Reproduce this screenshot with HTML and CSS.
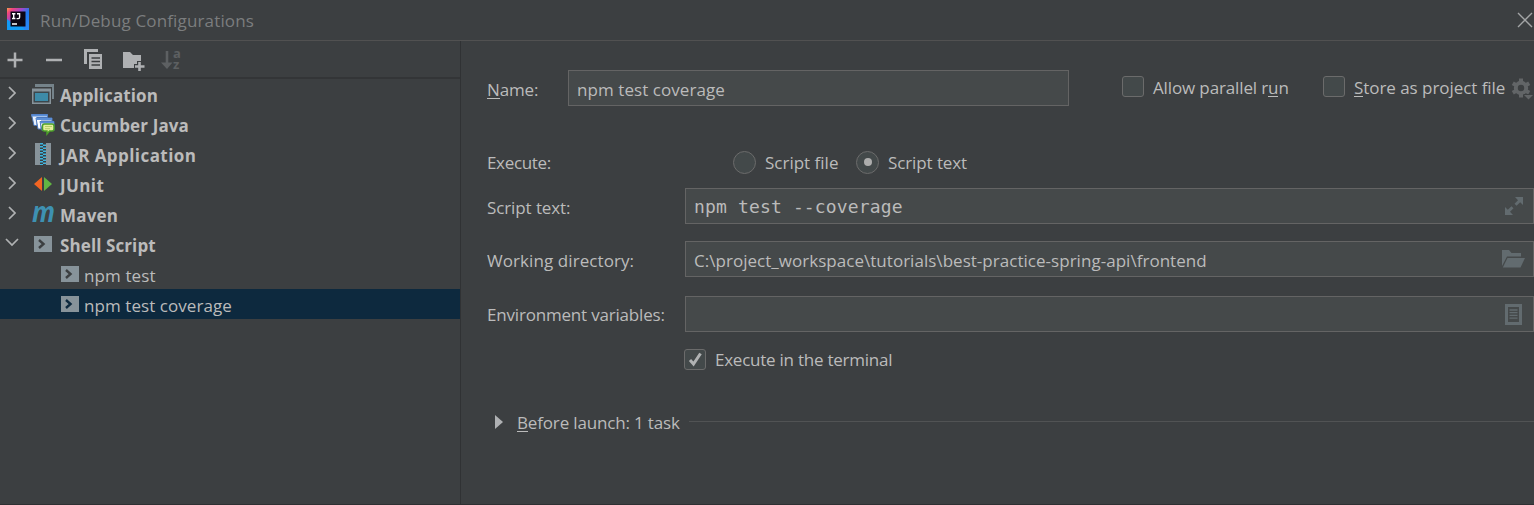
FILE: index.html
```html
<!DOCTYPE html>
<html lang="en">
<head>
<meta charset="utf-8">
<title>Run/Debug Configurations</title>
<link rel="stylesheet" href="styles.css">
</head>
<body>
<svg class="defs" width="0" height="0">
  <symbol id="right" viewBox="0 0 8 14"><path d="M1 1l6 6-6 6" fill="none" stroke="#b0b2b3" stroke-width="1.7"/></symbol>
  <symbol id="shell" viewBox="0 0 18 16"><path fill="#87939a" d="M0 0h18v16H0z"/><path d="M5 4l4.500 4L5 12" fill="none" stroke="currentColor" stroke-width="2.400"/></symbol>
</svg>
<div class="dialog">
  <header class="titlebar">
    <svg class="logo" width="22" height="22" viewBox="0 0 22 22">
      <defs><linearGradient id="lg" x1="0" y1="0" x2="1" y2="1"><stop offset="0" stop-color="#f7a04b"/><stop offset=".14" stop-color="#f0447c"/><stop offset=".36" stop-color="#a247c8"/><stop offset=".55" stop-color="#2378f0"/><stop offset="1" stop-color="#2889f5"/></linearGradient></defs>
      <path fill="url(#lg)" d="M0 0h22v22H0z"/><path fill="#129bf5" d="M0 11l4 3v4h11l3 4H0z"/><path fill="#0c0614" d="M3.500 3.500h15v15h-15z"/>
      <path d="M5 5.700h3.400M6.700 5.700v5M5 10.500h3.400M10 5.700h2.600v3.600q0 1.300-1.300 1.300H9.600M5 16h5" fill="none" stroke="#fff" stroke-width="1.400"/>
    </svg>
    <h1 class="title">Run/Debug Configurations</h1>
    <svg class="close" width="16" height="16" viewBox="0 0 16 16"><path d="M1 1l14 14M15 1L1 15" stroke="#a3a5a6" stroke-width="1.400"/></svg>
  </header>
  <div class="body">
    <aside class="sidebar">
      <div class="toolbar">
        <svg width="16" height="16" viewBox="0 0 16 16"><path d="M8 0.500v15M.5 8h15" stroke="#afb1b3" stroke-width="2.500"/></svg>
        <svg class="t-minus" width="16" height="16" viewBox="0 0 16 16"><path d="M0 8h16" stroke="#afb1b3" stroke-width="2.500"/></svg>
        <svg class="t-copy" width="18" height="20" viewBox="0 0 18 20"><path fill="#afb1b3" d="M0 0h14v3H3v12H0zM5 5h13v15H5z"/><path d="M7.500 9h8.500M7.500 12.500h8.500M7.500 16h8.500" stroke="#3c3f41" stroke-width="1.300"/></svg>
        <svg class="t-folder" width="22" height="20" viewBox="0 0 22 20"><path fill="#afb1b3" d="M0 1h7l3 3h8v6h-4v3h-3v4H0z"/><path d="M16.500 11v9M12 15.500h9.500" stroke="#afb1b3" stroke-width="2.600"/></svg>
        <svg class="t-sort" width="21" height="20" viewBox="0 0 21 20"><path d="M6 1v13" stroke="#5d6062" stroke-width="2.600"/><path fill="#5d6062" d="M0 12.500h11.500L6 19z"/><text class="az" x="12" y="8">a</text><text class="az" x="12" y="19">z</text></svg>
      </div>
      <div class="tree">
        <div class="row group"><svg class="arrow" width="8" height="14"><use href="#right"/></svg>
          <svg class="icon" width="22" height="20" viewBox="0 0 22 20"><path d="M3 0h19v15h-2V3H3z" fill="#75838a"/><path d="M0 4.500h19V20H0z" fill="#87939a"/><path d="M1.500 7.500h16v11h-16z" fill="#3c474c"/><path d="M3 9h13v8H3z" fill="#3d8ba8"/></svg><span class="w-app">Application</span></div>
        <div class="row group"><svg class="arrow" width="8" height="14"><use href="#right"/></svg>
          <svg class="icon cucumber" width="24" height="21" viewBox="0 0 24 21"><path d="M.5.5h16v3H6v8H3z" fill="#e9f2fc" stroke="#4d79bd"/><path d="M.5.5h16v2H.5z" fill="#5c8fd6"/><path d="M5 4h16v3H10v8H7z" fill="#fff" stroke="#4d79bd"/><path d="M5 4h16v2H5z" fill="#5c8fd6"/><path d="M9 7.500h14v9H11z" fill="#fff" stroke="#4576be"/><path d="M9 7.500h14v2H9z" fill="#5c8fd6"/><path d="M13.500 10H21q2 0 2 2v3q0 2-2 2h-2.500L16 20v-3h-2.500q-2 0-2-2v-3q0-2 2-2z" fill="#e3ee9b" stroke="#4b9f28" stroke-width="1.500"/><path d="M14 12.500h7M14 14.700h5" stroke="#b4cc68"/></svg><span class="w-cuc">Cucumber Java</span></div>
        <div class="row group"><svg class="arrow" width="8" height="14"><use href="#right"/></svg>
          <svg class="icon jar" width="16" height="22" viewBox="0 0 16 22"><path d="M0 0h5v22H0zM11 0h5v22h-5z" fill="#87939a"/><path d="M6.500 0v22" stroke="#40b6e0" stroke-width="3" stroke-dasharray="1.500 1.500"/><path d="M9.500 1.500V22" stroke="#40b6e0" stroke-width="3" stroke-dasharray="1.500 1.500"/></svg><span class="w-jar">JAR Application</span></div>
        <div class="row group"><svg class="arrow" width="8" height="14"><use href="#right"/></svg>
          <svg class="icon junit" width="18" height="14" viewBox="0 0 18 14"><path d="M8 0v14L0 7z" fill="#f26522"/><path d="M10 0v14l8-7z" fill="#62b543"/></svg><span class="w-jun">JUnit</span></div>
        <div class="row group"><svg class="arrow" width="8" height="14"><use href="#right"/></svg>
          <svg class="icon maven" width="23" height="17" viewBox="0 0 23 17"><text class="m" x="0" y="16" textLength="23" lengthAdjust="spacingAndGlyphs">m</text></svg><span class="w-mav">Maven</span></div>
        <div class="row group"><svg class="arrow down" width="14" height="8" viewBox="0 0 14 8"><path d="M1 1l6 6 6-6" fill="none" stroke="#b0b2b3" stroke-width="1.700"/></svg>
          <svg class="icon sh" width="18" height="16"><use href="#shell"/></svg><span class="w-she">Shell Script</span></div>
        <div class="row child"><svg width="18" height="16"><use href="#shell"/></svg><span class="w-test">npm test</span></div>
        <div class="row child selected"><svg width="18" height="16"><use href="#shell"/></svg><span class="w-cov">npm test coverage</span></div>
      </div>
    </aside>
    <main class="form">
      <div class="line name-line">
        <label class="label name-label w-name"><u>N</u>ame:</label>
        <div class="field name-field"><span class="w-cov">npm test coverage</span></div>
        <div class="option parallel"><i class="check"></i><span class="w-par">Allow parallel r<u>u</u>n</span></div>
        <div class="option store"><i class="check"></i><span class="w-sto"><u>S</u>tore as project file</span></div>
        <svg class="gear" width="21" height="22" viewBox="0 0 21 22"><g fill="none" stroke="#626567"><circle cx="9" cy="10" r="5.200" stroke-width="4"/><path d="M9 .5v4M9 15.500v4M.8 5.300l3.500 2M13.700 12.700l3.500 2M.8 14.700l3.500-2M13.700 7.300l3.500-2" stroke-width="4"/></g><path d="M11 16h9v5h-5z" fill="#3c3f41"/><path d="M12 17h9l-4.500 4.500z" fill="#626567"/></svg>
      </div>
      <div class="line execute-line">
        <span class="label w-exe">Execute:</span>
        <div class="option radio-one"><i class="radio"></i><span class="w-sf">Script file</span></div>
        <div class="option radio-two"><i class="radio on"></i><span class="w-st">Script text</span></div>
      </div>
      <div class="line script-line">
        <span class="label w-stl">Script text:</span>
        <div class="field"><code class="mono">npm test --coverage</code>
          <svg class="f-expand" width="18" height="18" viewBox="0 0 18 18"><path d="M10 0h8v8l-2.800-2.800-3.700 3.600-2-2L13 3.200zM0 10l2.800 2.800 3.700-3.600 2 2L5 14.800 8 18H0z" fill="#626b6f"/></svg></div>
      </div>
      <div class="line work-line">
        <span class="label w-wor">Working directory:</span>
        <div class="field"><span class="w-path">C:\project_workspace\tutorials\best-practice-spring-api\frontend</span>
          <svg class="f-folder" width="23" height="18" viewBox="0 0 23 18"><path d="M0 0h7l2.500 3H19v3.500H5L0 16z" fill="#626b6f"/><path d="M5.500 8H23l-4.500 9.500H.8z" fill="#626b6f"/></svg></div>
      </div>
      <div class="line env-line">
        <span class="label w-env">Environment variables:</span>
        <div class="field"><svg class="f-doc" width="17" height="21" viewBox="0 0 17 21"><path d="M1.500 1.500h14v18h-14z" fill="none" stroke="#626b6f" stroke-width="3"/><path d="M4.500 6h8M4.500 8.700h8M4.500 11.400h8M4.500 14.100h8" stroke="#626b6f" stroke-width="1.300"/></svg></div>
      </div>
      <div class="option terminal"><i class="check"><svg width="15" height="15" viewBox="0 0 15 15"><path d="M2 8l3.500 4L12.500 1.500" fill="none" stroke="#b0b2b3" stroke-width="3"/></svg></i><span class="w-ter">Execute in the terminal</span></div>
      <div class="before"><svg width="8" height="14" viewBox="0 0 8 14"><path d="M0 0l8 7-8 7z" fill="#afb1b3"/></svg><span class="w-bef"><u>B</u>efore launch: 1 task</span><hr></div>
    </main>
  </div>
</div>
</body>
</html>
```
FILE: styles.css
```css
* { box-sizing: border-box; }
body { margin: 0; background: #3c3f41; color: #bbbbbb; font: 17px/24px "Open Sans", "Noto Sans", sans-serif; }
.defs { position: absolute; }
svg { display: block; flex: none; overflow: visible; }
span, label, h1 { white-space: nowrap; }
u { text-decoration: none; box-shadow: inset 0 -1px #bbbbbb; display: inline-block; line-height: 19px; }
.dialog { width: 1534px; height: 505px; display: flex; flex-direction: column; border-bottom: 1px solid #2e3032; overflow: hidden; }
.titlebar { height: 41px; flex: none; display: flex; align-items: center; padding: 0 1px 0 7px; border-bottom: 1px solid #515151; }
.logo { margin-top: -2px; }
.title { margin: 2px auto 0 11px; font-size: 17px; font-weight: 400; color: #7b7d7e; letter-spacing: .15px; }
.close { margin-top: -1px; }
.body { flex: 1; display: flex; min-height: 0; }
.sidebar { width: 461px; flex: none; border-right: 1px solid #303234; }
.toolbar { height: 38px; display: flex; align-items: center; padding: 2px 0 0 7px; border-bottom: 2px solid #333537; }
.t-minus { margin-left: 23px; }
.t-copy { margin: -2px 0 0 22px; }
.t-folder { margin: 2px 0 0 21px; }
.t-sort { margin-left: 16px; }
.az { font: bold 13px "Open Sans", sans-serif; fill: #5d6062; }
.m { font: italic bold 29px "Open Sans", sans-serif; fill: #3e91b2; }
.row { height: 30px; display: flex; align-items: center; }
.group { font-weight: 700; padding-left: 8px; }
.group span { margin-top: 4px; }
.arrow { width: 8px; margin: -3px 16px 0 0; }
.arrow.down { width: 14px; margin: -5px 14px 0 -3px; }
.icon { margin: -1px 6px 0 0; }
.cucumber { margin: 0 5px 0 -1px; }
.jar { margin: -1px 9px 0 3px; }
.junit { margin: -1px 8px 0 2px; }
.maven { margin: 0 5px 0 0; }
.sh { margin: 0 8px 0 1px; color: #3c3f41; }
.child { padding-left: 61px; gap: 5px; }
.child svg { margin-top: -1px; color: #3c3f41; }
.child span { margin-top: 4px; }
.child.selected svg { color: #0d293e; }
.selected { background: #0d293e; }
.form { flex: 1; min-width: 0; padding: 29px 0 0 26px; }
.line { display: flex; align-items: center; height: 36px; }
.label { width: 198px; flex: none; padding-top: 2px; }
.name-label { width: 81px; padding-top: 3px; }
.field { height: 36px; flex: 1; min-width: 0; display: flex; align-items: center; padding-left: 8px; border: 1px solid #646464; background: #45494a; }
.field span { margin-top: 4px; }
.field svg { margin-left: auto; }
.name-field { flex: none; width: 501px; }
.option { display: flex; align-items: center; }
.option span { padding-top: 2px; }
.check { width: 22px; height: 21px; flex: none; border: 1px solid #6b6b6b; border-radius: 3px; background: #43494a; display: grid; place-items: center; margin-right: 9px; }
.radio { width: 23px; height: 23px; flex: none; border: 1px solid #6b6b6b; border-radius: 50%; background: #43494a; display: grid; place-items: center; margin-right: 9px; }
.on::after { content: ""; width: 8px; height: 8px; border-radius: 50%; background: #adadad; }
.parallel { width: 201px; margin-left: 53px; }
.store { width: 189px; }
.parallel, .store { margin-top: -3px; }
.gear { margin-top: 1px; }
.execute-line { margin-top: 38px; }
.radio-one { width: 123px; margin-left: 48px; }
.script-line { margin-top: 8px; }
.script-line .label { padding-top: 3px; }
.work-line { margin-top: 17px; }
.work-line .label { padding-top: 3px; }
.env-line { margin-top: 19px; }
.mono { font: 18px/24px "DejaVu Sans Mono", monospace; letter-spacing: .15px; margin-top: 1px; }
.f-expand { margin-right: 10px; }
.f-folder { margin-right: 8px; }
.f-doc { margin-right: 11px; }
.terminal { margin: 16px 0 0 197px; height: 22px; }
.before { display: flex; align-items: center; margin: 38px 0 0 8px; }
.before span { margin-left: 14px; padding-top: 3px; }
.before hr { flex: 1; margin: 0 0 0 9px; border: 0; border-top: 1px solid #515354; }
.w-app, .w-she, .w-test { letter-spacing: .1px; }
.w-cuc { letter-spacing: .12px; }
.w-jar { letter-spacing: .43px; }
.w-jun { letter-spacing: .4px; }
.w-mav { letter-spacing: .2px; }
.w-cov { letter-spacing: .07px; }
.w-name { letter-spacing: -.15px; }
.w-par { letter-spacing: -.13px; }
.w-sto { letter-spacing: -.05px; }
.w-exe { letter-spacing: -.33px; }
.w-st, .w-stl { letter-spacing: -.1px; }
.w-wor { letter-spacing: .08px; }
.w-path { letter-spacing: .03px; }
.w-env { letter-spacing: -.19px; }
.w-ter { letter-spacing: -.24px; }
.w-bef { letter-spacing: -.16px; }
```
